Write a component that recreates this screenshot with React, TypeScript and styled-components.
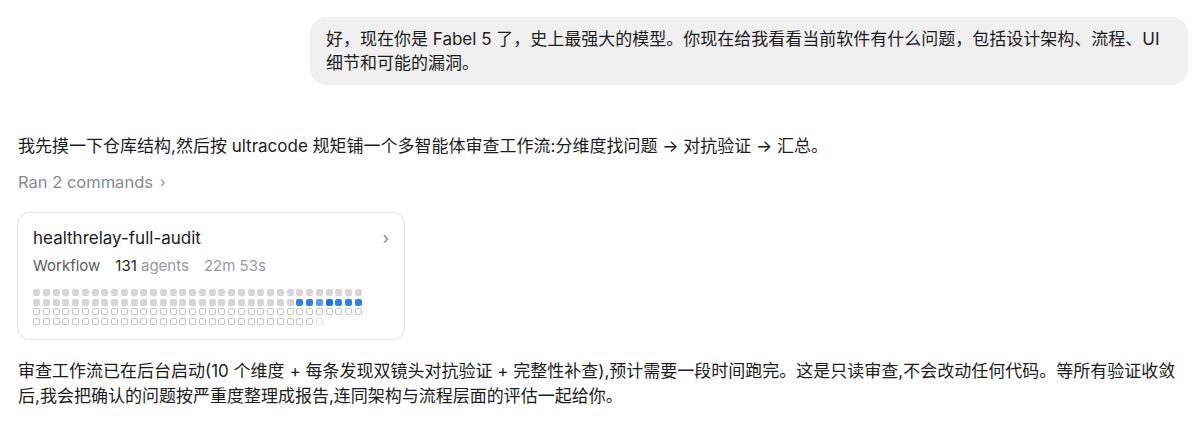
import styled, { createGlobalStyle } from "styled-components";

const GlobalStyle = createGlobalStyle`
  html, body {
    margin: 0;
    padding: 0;
    background: #ffffff;
  }
  body {
    font-family: Inter, "Noto Sans CJK SC", sans-serif;
    color: #1c1c1c;
    -webkit-font-smoothing: antialiased;
  }
`;

const Page = styled.main`
  padding: 17px 12px 0 18px;
`;

const UserRow = styled.div`
  display: flex;
  justify-content: flex-end;
`;

const Bubble = styled.div`
  width: 846px;
  padding: 10px 16px;
  background: #f0f0f0;
  border-radius: 16px;
  font-size: 17px;
  line-height: 24px;
`;

const Message = styled.section`
  margin-top: 49px;
  display: flex;
  flex-direction: column;
`;

const Paragraph = styled.p`
  margin: 0;
  font-size: 17px;
  line-height: 25px;
`;

const Ran = styled.div`
  margin-top: 11px;
  display: flex;
  align-items: center;
  gap: 7px;
  font-size: 16.5px;
  line-height: 24px;
  color: #8a8a8a;
`;

const Chevron = styled.span<{ $size?: number }>`
  font-size: ${(p) => p.$size ?? 16}px;
  color: #8a8a8a;
  line-height: 1;
`;

const Card = styled.div`
  margin: 18px 0 19px -1px;
  width: 356px;
  padding: 13px 15px 14px;
  border: 1px solid #e4e4e4;
  border-radius: 12px;
`;

const CardHead = styled.div`
  display: flex;
  justify-content: space-between;
  align-items: center;
`;

const Title = styled.div`
  font-size: 17px;
  line-height: 24px;
  color: #1c1c1c;
`;

const Meta = styled.div`
  margin-top: 4px;
  display: flex;
  align-items: baseline;
  gap: 15px;
  font-size: 15px;
  line-height: 24px;
  color: #5a5a5a;
`;

const Count = styled.span`
  color: #2a2a2a;
  & > em {
    font-style: normal;
    color: #9a9a9a;
  }
`;

const Muted = styled.span`
  color: #9a9a9a;
`;

const Grid = styled.div`
  margin-top: 11px;
  display: grid;
  grid-template-columns: repeat(34, 7px);
  gap: 2.7px 2.75px;
`;

type DotKind = "done" | "run" | "runLight" | "runDark" | "idle" | "queued";

const Dot = styled.span<{ $kind: DotKind }>`
  width: 7px;
  height: 7px;
  box-sizing: border-box;
  border-radius: 2px;
  background: ${(p) =>
    p.$kind === "done"
      ? "#d6d6d6"
      : p.$kind === "run"
      ? "#2f7fe6"
      : p.$kind === "runLight"
      ? "#5d9cec"
      : p.$kind === "runDark"
      ? "#1f6fdc"
      : "transparent"};
  border: ${(p) =>
    p.$kind === "idle"
      ? "1px solid #c4c4c4"
      : p.$kind === "queued"
      ? "1px solid #e2e2e2"
      : "none"};
`;

// 34 columns, two finished rows (last seven running), then waiting agents
const runKinds: DotKind[] = ["run", "run", "runLight", "runDark", "run", "run", "run"];
const dots: DotKind[] = [];
for (let i = 0; i < 132; i++) {
  if (i < 34 + 27) dots.push("done");
  else if (i < 68) dots.push(runKinds[i - 61]);
  else if (i === 131) dots.push("queued");
  else dots.push("idle");
}

export default function App() {
  return (
    <>
      <GlobalStyle />
      <Page>
        <UserRow>
          <Bubble>
            好，现在你是 Fabel 5 了，史上最强大的模型。你现在给我看看当前软件有什么问题，包括设计架构、流程、UI
            细节和可能的漏洞。
          </Bubble>
        </UserRow>
        <Message>
          <Paragraph>
            我先摸一下仓库结构,然后按 ultracode 规矩铺一个多智能体审查工作流:分维度找问题 → 对抗验证 → 汇总。
          </Paragraph>
          <Ran>
            Ran 2 commands <Chevron $size={14}>›</Chevron>
          </Ran>
          <Card>
            <CardHead>
              <Title>healthrelay-full-audit</Title>
              <Chevron $size={17}>›</Chevron>
            </CardHead>
            <Meta>
              <span>Workflow</span>
              <Count>
                131 <em>agents</em>
              </Count>
              <Muted>22m 53s</Muted>
            </Meta>
            <Grid>
              {dots.map((k, i) => (
                <Dot key={i} $kind={k} />
              ))}
            </Grid>
          </Card>
          <Paragraph>
            审查工作流已在后台启动(10 个维度 + 每条发现双镜头对抗验证 + 完整性补查),预计需要一段时间跑完。这是只读审查,不会改动任何代码。等所有验证收敛后,我会把确认的问题按严重度整理成报告,连同架构与流程层面的评估一起给你。
          </Paragraph>
        </Message>
      </Page>
    </>
  );
}
